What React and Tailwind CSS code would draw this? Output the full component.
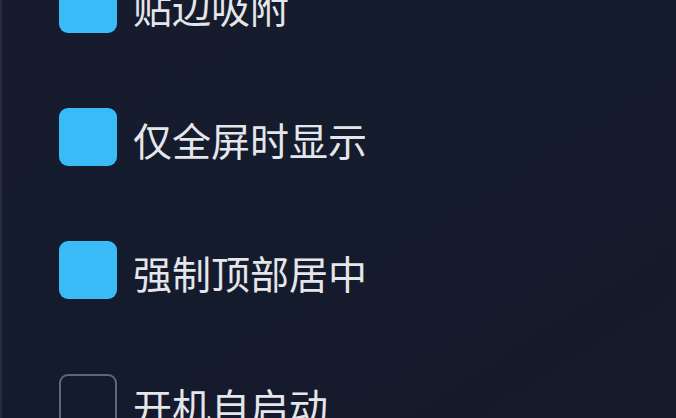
const options = [
  { id: 'snap', label: '贴边吸附', checked: true },
  { id: 'fullscreen', label: '仅全屏时显示', checked: true },
  { id: 'center', label: '强制顶部居中', checked: true },
  { id: 'autostart', label: '开机自启动', checked: false },
];

const App = () => {
  return (
    <div className="h-[418px] w-[676px] overflow-hidden border-l-2 border-[#262c3c] bg-gradient-to-br from-[#161c2d] via-[#141b2d] to-[#161a2a]">
      <div
        className="-mt-[25px] flex flex-col gap-[75px] pl-[57px]"
        style={{ fontFamily: '"Noto Sans CJK SC", "Noto Sans", sans-serif' }}
      >
        {options.map((opt) => (
          <label key={opt.id} className="flex items-center gap-[16px]">
            <span
              className={
                opt.checked
                  ? 'h-[58px] w-[58px] shrink-0 rounded-[9px] bg-[#38bbf7]'
                  : 'h-[58px] w-[58px] shrink-0 rounded-[9px] border-2 border-[#5f6676] bg-transparent'
              }
            />
            <span className="pt-[5px] text-[39px] leading-none text-[#e4e6ea]">{opt.label}</span>
          </label>
        ))}
      </div>
    </div>
  );
};

export default App;
